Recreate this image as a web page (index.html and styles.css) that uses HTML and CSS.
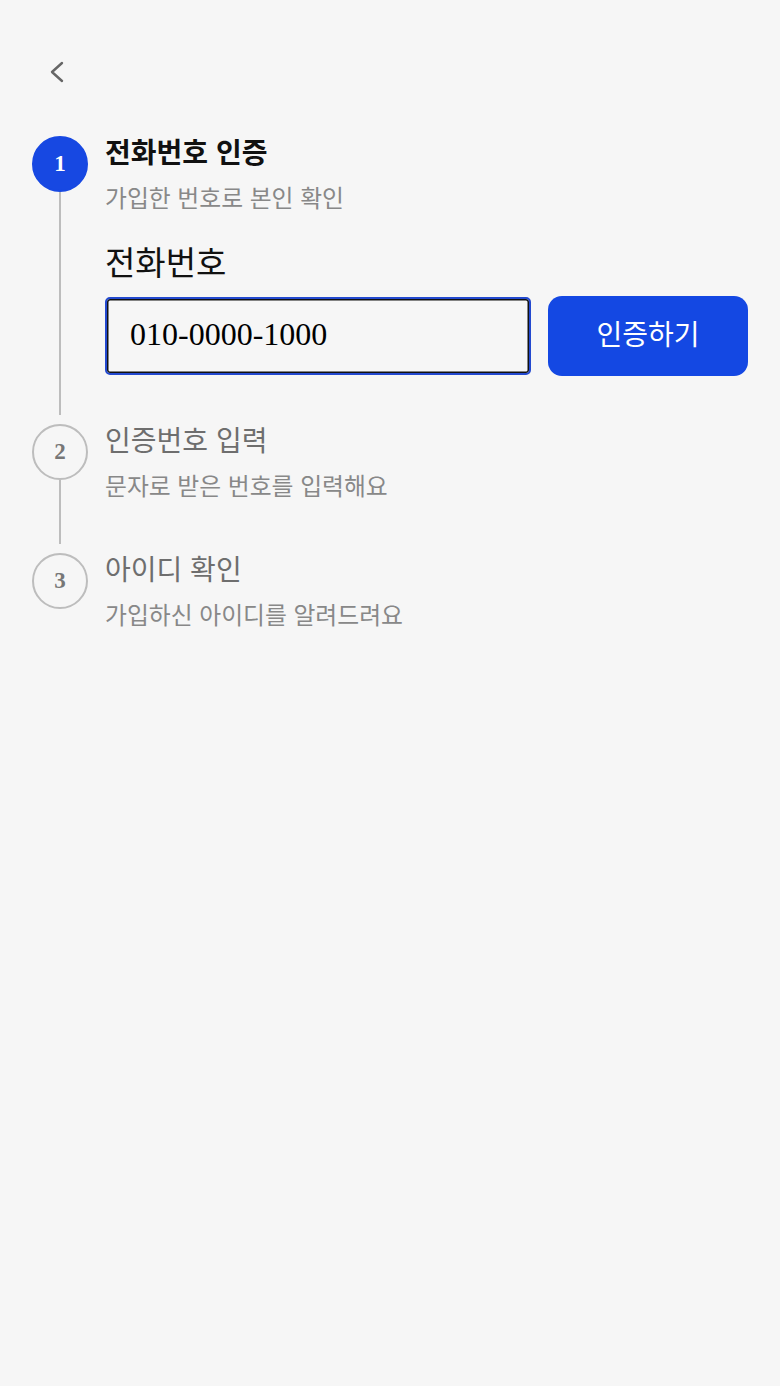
FILE: index.html
```html
<!DOCTYPE html>
<html lang="ko">
<head>
<meta charset="utf-8">
<title>아이디 찾기</title>
<link rel="stylesheet" href="styles.css">
</head>
<body>
<div class="page">
  <header class="topbar">
    <button class="back" type="button" aria-label="뒤로">
      <svg width="20" height="24" viewBox="0 0 20 24"><polyline points="15,3 5,12 15,21" fill="none" stroke="#666" stroke-width="2.4" stroke-linecap="round" stroke-linejoin="round"/></svg>
    </button>
  </header>

  <ol class="steps">
    <li class="step step--active">
      <div class="rail">
        <span class="num">1</span>
        <span class="line"></span>
      </div>
      <div class="body">
        <h2 class="title">전화번호 인증</h2>
        <p class="sub">가입한 번호로 본인 확인</p>
        <label class="label" for="phone">전화번호</label>
        <div class="phone-row">
          <input id="phone" class="phone" type="text" value="010-0000-1000">
          <button class="verify" type="button">인증하기</button>
        </div>
      </div>
    </li>
    <li class="step">
      <div class="rail">
        <span class="num">2</span>
        <span class="line"></span>
      </div>
      <div class="body">
        <h2 class="title">인증번호 입력</h2>
        <p class="sub">문자로 받은 번호를 입력해요</p>
      </div>
    </li>
    <li class="step step--last">
      <div class="rail">
        <span class="num">3</span>
      </div>
      <div class="body">
        <h2 class="title">아이디 확인</h2>
        <p class="sub">가입하신 아이디를 알려드려요</p>
      </div>
    </li>
  </ol>
</div>
</body>
</html>
```

FILE: styles.css
```css
html, body {
  margin: 0;
  padding: 0;
  background: #f6f6f6;
}
body {
  font-family: "Noto Sans CJK KR", "Noto Sans", sans-serif;
  color: #111;
  min-height: 1386px;
}
.page {
  padding: 60px 32px 0 32px;
}
.topbar {
  height: 24px;
  display: flex;
  align-items: center;
}
.back {
  border: 0;
  background: none;
  padding: 0;
  margin-left: 15px;
  width: 20px;
  height: 24px;
  display: block;
  cursor: pointer;
}
.back svg { display: block; }

.steps {
  list-style: none;
  margin: 52px 0 0 0;
  padding: 0;
  display: flex;
  flex-direction: column;
  gap: 9px;
}
.step {
  display: flex;
  gap: 17px;
}
.rail {
  width: 56px;
  flex: 0 0 56px;
  display: flex;
  flex-direction: column;
  align-items: center;
}
.num {
  box-sizing: border-box;
  width: 56px;
  height: 56px;
  border-radius: 50%;
  border: 2px solid #bdbdbd;
  display: flex;
  align-items: center;
  justify-content: center;
  font-family: "Liberation Serif", serif;
  font-weight: bold;
  font-size: 23px;
  color: #777;
}
.step--active .num {
  background: #1748e2;
  border-color: #1748e2;
  color: #fff;
}
.line {
  flex: 1;
  width: 2px;
  background: #bdbdbd;
  margin-left: -1px;
}
.body {
  flex: 1;
  min-width: 0;
  padding-bottom: 44px;
}
.step--active .body { padding-bottom: 40px; }
.step--last .body { padding-bottom: 0; }

.title {
  margin: 0;
  font-size: 28px;
  line-height: 30px;
  font-weight: normal;
  color: #6e6e6e;
}
.step--active .title {
  font-weight: bold;
  color: #111;
}
.sub {
  margin: 16px 0 0 0;
  font-size: 23.8px;
  line-height: 30px;
  color: #888;
}
.label {
  display: block;
  margin-top: 29px;
  font-size: 33px;
  line-height: 40px;
  color: #111;
}
.phone-row {
  margin-top: 16px;
  display: flex;
  gap: 17px;
  height: 78px;
}
.phone {
  flex: 1;
  min-width: 0;
  box-sizing: border-box;
  height: 78px;
  margin: 0;
  border: 2px solid #2349cf;
  box-shadow: inset 0 0 0 1.5px #111;
  border-radius: 5px;
  background: #f6f6f6;
  padding: 0 0 4px 23px;
  font-family: "Liberation Serif", serif;
  font-size: 32px;
  color: #000;
  outline: none;
}
.verify {
  flex: 0 0 200px;
  height: 80px;
  margin-top: -1px;
  border: 0;
  border-radius: 14px;
  background: #1448e3;
  color: #fff;
  font-family: "Noto Sans CJK KR", "Noto Sans", sans-serif;
  font-size: 28px;
  padding: 0 0 6px 0;
  cursor: pointer;
}
```
